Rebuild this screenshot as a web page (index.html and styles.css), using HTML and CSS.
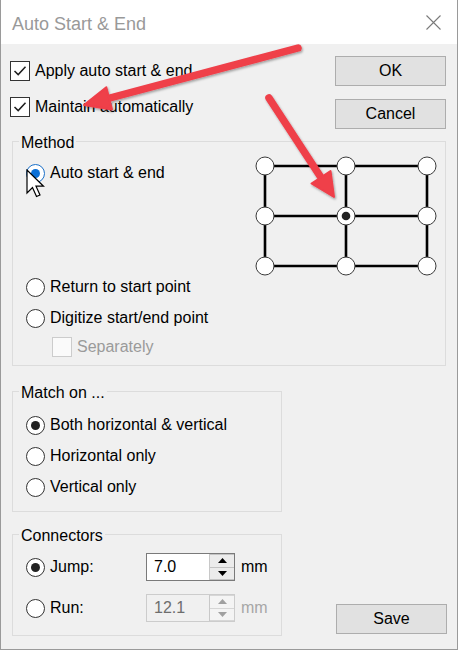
FILE: index.html
```html
<!DOCTYPE html>
<html>
<head>
<meta charset="utf-8">
<title>Auto Start &amp; End</title>
<link rel="stylesheet" href="styles.css">
</head>
<body>
<div class="window">
  <div class="titlebar">
    <span class="title">Auto Start &amp; End</span>
    <svg class="close" width="15" height="15" viewBox="0 0 15 15"><path d="M0.5 0.5 L14.5 14.5 M14.5 0.5 L0.5 14.5" stroke="#7a7a7a" stroke-width="1.1" fill="none"/></svg>
  </div>
  <div class="content">
    <div class="top-row">
      <div class="checks">
        <div class="check-row"><span class="checkbox"><svg width="18" height="18" viewBox="0 0 18 18"><path d="M3.5 9 L7.2 12.6 L14.5 4.8" stroke="#1e1e1e" stroke-width="1.5" fill="none"/></svg></span><span>Apply auto start &amp; end</span></div>
        <div class="check-row"><span class="checkbox"><svg width="18" height="18" viewBox="0 0 18 18"><path d="M3.5 9 L7.2 12.6 L14.5 4.8" stroke="#1e1e1e" stroke-width="1.5" fill="none"/></svg></span><span>Maintain automatically</span></div>
      </div>
      <div class="buttons">
        <button class="btn">OK</button>
        <button class="btn">Cancel</button>
      </div>
    </div>

    <fieldset class="group method">
      <legend>Method</legend>
      <div class="method-body">
        <div class="method-options">
          <div class="radio-row"><span class="radio radio-focus"><span class="dot"></span></span><span>Auto start &amp; end</span></div>
          <div class="radio-row return"><span class="radio"></span><span>Return to start point</span></div>
          <div class="radio-row digitize"><span class="radio"></span><span>Digitize start/end point</span></div>
          <div class="check-row separately disabled"><span class="checkbox checkbox-disabled"></span><span>Separately</span></div>
        </div>
        <svg class="grid" width="182" height="120" viewBox="0 0 182 120">
          <g stroke="#000" stroke-width="2.6" fill="none">
            <path d="M10 10 H172 M10 60 H172 M10 110 H172 M10 10 V110 M91 10 V110 M172 10 V110"/>
          </g>
          <g fill="#fff" stroke="#3a3a3a" stroke-width="1">
            <circle cx="10" cy="10" r="9"/><circle cx="91" cy="10" r="9"/><circle cx="172" cy="10" r="9"/>
            <circle cx="10" cy="60" r="9"/><circle cx="91" cy="60" r="9"/><circle cx="172" cy="60" r="9"/>
            <circle cx="10" cy="110" r="9"/><circle cx="91" cy="110" r="9"/><circle cx="172" cy="110" r="9"/>
          </g>
          <circle cx="91" cy="60" r="4.3" fill="#222"/>
        </svg>
      </div>
    </fieldset>

    <div class="bottom-row">
      <div class="left-col">
        <fieldset class="group match">
          <legend>Match on ...</legend>
          <div class="match-body">
            <div class="radio-row"><span class="radio"><span class="dot dark"></span></span><span>Both horizontal &amp; vertical</span></div>
            <div class="radio-row"><span class="radio"></span><span>Horizontal only</span></div>
            <div class="radio-row"><span class="radio"></span><span>Vertical only</span></div>
          </div>
        </fieldset>
        <fieldset class="group connectors">
          <legend>Connectors</legend>
          <div class="conn-body">
            <div class="conn-row">
              <span class="radio"><span class="dot dark"></span></span>
              <span class="conn-label">Jump:</span>
              <div class="spin">
                <span class="spin-text">7.0</span>
                <span class="spin-btns">
                  <span class="spin-btn"><svg width="9" height="5" viewBox="0 0 9 5"><polygon points="0,5 9,5 4.5,0" fill="#000"/></svg></span>
                  <span class="spin-btn"><svg width="9" height="5" viewBox="0 0 9 5"><polygon points="0,0 9,0 4.5,5" fill="#000"/></svg></span>
                </span>
              </div>
              <span class="unit">mm</span>
            </div>
            <div class="conn-row">
              <span class="radio"></span>
              <span class="conn-label">Run:</span>
              <div class="spin spin-disabled">
                <span class="spin-text">12.1</span>
                <span class="spin-btns">
                  <span class="spin-btn"><svg width="9" height="5" viewBox="0 0 9 5"><polygon points="0,5 9,5 4.5,0" fill="#a0a0a0"/></svg></span>
                  <span class="spin-btn"><svg width="9" height="5" viewBox="0 0 9 5"><polygon points="0,0 9,0 4.5,5" fill="#a0a0a0"/></svg></span>
                </span>
              </div>
              <span class="unit unit-disabled">mm</span>
            </div>
          </div>
        </fieldset>
      </div>
      <button class="btn save">Save</button>
    </div>
  </div>

  <svg class="arrows" width="460" height="652" viewBox="0 0 460 652">
    <defs>
      <filter id="sh" x="-20%" y="-20%" width="140%" height="140%">
        <feDropShadow dx="1" dy="1.5" stdDeviation="1.2" flood-color="#000" flood-opacity="0.35"/>
      </filter>
    </defs>
    <g filter="url(#sh)" fill="#ef3f4a" stroke="#ef3f4a" stroke-linecap="round" stroke-linejoin="round">
      <path d="M298 48 L108 98.5" stroke-width="7.5" fill="none"/>
      <polygon points="84,105 106.3,87.2 112,109.4" stroke-width="2"/>
      <path d="M269 98 L320 176" stroke-width="7.5" fill="none"/>
      <polygon points="334,197 311.5,183.5 330.5,171" stroke-width="2"/>
    </g>
  </svg>

  <svg class="cursor" width="20" height="32" viewBox="0 0 20 32">
    <path d="M1 1 L1 24 L6.5 18.5 L10.5 27.5 L14 26 L10 17.2 L17.5 17.2 Z" fill="#fff" stroke="#000" stroke-width="1.2" stroke-linejoin="miter"/>
  </svg>
</div>
</body>
</html>
```

FILE: styles.css
```css
html, body {
  margin: 0;
  padding: 0;
  background: #ffffff;
}

body {
  font-family: "Liberation Sans", Arial, sans-serif;
  font-size: 16px;
  color: #000;
}

.window {
  position: relative;
  width: 458px;
  height: 650px;
  box-sizing: border-box;
  border: 1px solid #9a9a9a;
  border-top: none;
  background: #f0f0f0;
  display: flex;
  flex-direction: column;
}

.titlebar {
  height: 44px;
  flex: none;
  background: #ffffff;
  display: flex;
  align-items: center;
  justify-content: space-between;
  padding: 0 16px 0 11px;
  box-sizing: border-box;
}

.title {
  font-size: 18px;
  line-height: 18px;
  color: #999999;
  padding-top: 3px;
}

.close {
  display: block;
}

.content {
  flex: 1;
  display: flex;
  flex-direction: column;
}

.top-row {
  display: flex;
  justify-content: space-between;
  padding: 0 11px 0 9px;
}

.checks {
  display: flex;
  flex-direction: column;
  gap: 16px;
  margin-top: 17px;
}

.check-row {
  display: flex;
  align-items: center;
  gap: 5px;
  height: 20px;
  line-height: 20px;
  white-space: nowrap;
}

.checkbox {
  width: 20px;
  height: 20px;
  box-sizing: border-box;
  border: 1px solid #333333;
  background: #ffffff;
  display: flex;
  align-items: center;
  justify-content: center;
  flex: none;
}

.checkbox-disabled {
  border-color: #cccccc;
  background: #fafafa;
}

.disabled {
  color: #9a9a9a;
}

.buttons {
  display: flex;
  flex-direction: column;
  gap: 13px;
  margin-top: 12px;
}

.btn {
  width: 111px;
  height: 30px;
  box-sizing: border-box;
  border: 1px solid #adadad;
  background: #e1e1e1;
  font-family: inherit;
  font-size: 16px;
  color: #000;
  padding: 0;
  margin: 0;
}

.group {
  margin: 0 11px;
  padding: 0;
  border: 1px solid #dcdcdc;
  min-width: 0;
}

.group legend {
  margin-left: 6px;
  padding: 4px 2px 0;
  line-height: 18px;
}

.method {
  margin-top: 1px;
}

.method-body {
  display: flex;
  justify-content: space-between;
  align-items: flex-start;
  padding: 0 8px 8px 13px;
}

.method-options {
  display: flex;
  flex-direction: column;
  padding-top: 11px;
}

.radio-row {
  display: flex;
  align-items: center;
  gap: 5px;
  height: 20px;
  line-height: 20px;
  white-space: nowrap;
}

.radio {
  width: 19px;
  height: 19px;
  box-sizing: border-box;
  border: 1px solid #333333;
  border-radius: 50%;
  background: #ffffff;
  display: flex;
  align-items: center;
  justify-content: center;
  flex: none;
}

.radio-focus {
  border-color: #1b70c9;
}

.dot {
  width: 9px;
  height: 9px;
  border-radius: 50%;
  background: #0a6fd6;
}

.dot.dark {
  background: #222222;
}

.return {
  margin-top: 94px;
}

.digitize {
  margin-top: 11px;
}

.separately {
  margin-top: 9px;
  margin-left: 26px;
}

.grid {
  display: block;
  margin-top: 4px;
}

.bottom-row {
  display: flex;
  justify-content: space-between;
  align-items: flex-end;
  margin-top: 14px;
  padding-right: 10px;
}

.left-col {
  display: flex;
  flex-direction: column;
}

.left-col .group {
  width: 270px;
  box-sizing: border-box;
}

.match-body {
  display: flex;
  flex-direction: column;
  gap: 11px;
  padding: 13px 0 14px 13px;
}

.connectors {
  margin-top: 11px;
}

.conn-body {
  display: flex;
  flex-direction: column;
  gap: 13px;
  padding: 8px 0 13px 13px;
}

.conn-row {
  display: flex;
  align-items: center;
  height: 28px;
}

.conn-label {
  margin-left: 5px;
  width: 96px;
}

.spin {
  display: flex;
  width: 89px;
  height: 28px;
  box-sizing: border-box;
  border: 1px solid #7a7a7a;
  background: #ffffff;
}

.spin-text {
  flex: 1;
  padding-left: 7px;
  line-height: 26px;
}

.spin-btns {
  display: flex;
  flex-direction: column;
  width: 24px;
  border-left: 1px solid #c8c8c8;
}

.spin-btn {
  flex: 1;
  display: flex;
  align-items: center;
  justify-content: center;
  background: #ececec;
  border: 1px solid #c4c4c4;
  border-left: none;
  border-right: none;
}

.spin-btn + .spin-btn {
  border-top: none;
}

.spin-disabled {
  border-color: #cccccc;
  background: #f0f0f0;
  color: #6d6d6d;
}

.spin-disabled .spin-btn {
  background: #f4f4f4;
  border-color: #d6d6d6;
}

.unit {
  margin-left: 6px;
}

.unit-disabled {
  color: #a6a6a6;
}

.save {
  margin-bottom: 2px;
}

.arrows {
  position: absolute;
  left: -1px;
  top: 0;
  pointer-events: none;
}

.cursor {
  position: absolute;
  left: 25px;
  top: 169px;
  pointer-events: none;
}
```
